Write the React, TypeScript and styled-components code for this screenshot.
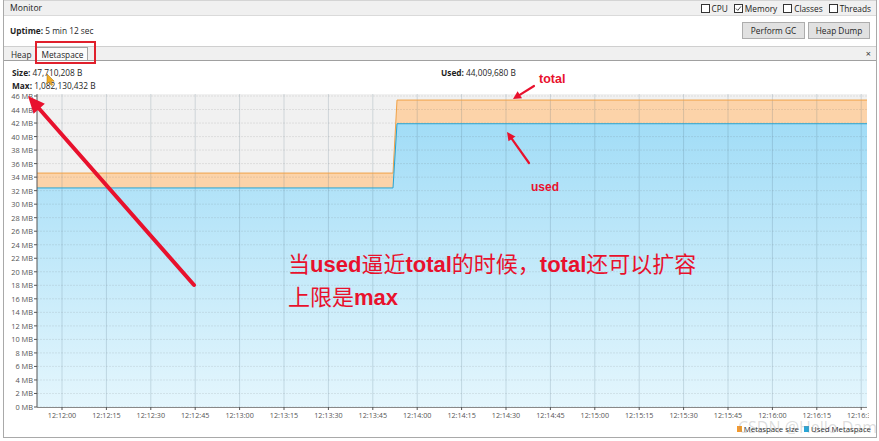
import React from 'react';
import styled, { createGlobalStyle } from 'styled-components';

const Global = createGlobalStyle`
  html, body { margin: 0; padding: 0; background: #fff; }
  body { font-family: "Open Sans", "Noto Sans", sans-serif; color: #1e1e1e; }
  * { box-sizing: border-box; }
`;

const Page = styled.div`
  position: relative;
  width: 879px;
  height: 441px;
  overflow: hidden;
  background: #fff;
`;

const Panel = styled.div`
  margin-left: 3px;
  width: 874px;
  height: 438px;
  border: 1px solid #a9a9a9;
  border-top: none;
  display: flex;
  flex-direction: column;
  font-size: 8.3px;
`;

const Header = styled.div`
  height: 16px;
  background: #f0f0f0;
  border-top: 1px solid #d4d4d4;
  border-bottom: 1px solid #dadada;
  display: flex;
  align-items: center;
  justify-content: space-between;
  padding: 0 5px 0 6px;
`;

const Title = styled.span`
  font-size: 8.6px;
  color: #222;
`;

const Checks = styled.div`
  display: flex;
  align-items: center;
  gap: 6px;
`;

const CheckLabel = styled.label`
  display: flex;
  align-items: center;
  gap: 2px;
  color: #222;
`;

const Box = styled.span`
  width: 9px;
  height: 9px;
  border: 1px solid #333;
  background: #fff;
  display: flex;
  align-items: center;
  justify-content: center;
`;

const UptimeRow = styled.div`
  height: 30px;
  display: flex;
  align-items: center;
  justify-content: space-between;
  padding: 0 6px 2px 6px;
  background: #fff;
`;

const Buttons = styled.div`
  display: flex;
  gap: 3px;
`;

const Button = styled.button<{ $w: number }>`
  width: ${(p) => p.$w}px;
  height: 17px;
  background: #e1e1e1;
  border: 1px solid #adadad;
  font: inherit;
  font-size: 8.3px;
  color: #1e1e1e;
  padding: 0;
`;

const TabBar = styled.div`
  height: 15px;
  background: #f0f0f0;
  border-top: 1px solid #cfcfcf;
  border-bottom: 1px solid #a0a0a0;
  display: flex;
  align-items: stretch;
  padding-left: 2px;
`;

const Tab = styled.div<{ $active?: boolean }>`
  display: flex;
  align-items: center;
  padding: 0 4px;
  background: ${(p) => (p.$active ? '#fbfbfb' : 'transparent')};
  border: 1px solid ${(p) => (p.$active ? '#a5a5a5' : 'transparent')};
  border-bottom: none;
  color: #1e1e1e;
`;

const Close = styled.div`
  margin-left: auto;
  padding-right: 5px;
  display: flex;
  align-items: center;
  font-size: 9px;
  color: #333;
`;

const Info = styled.div`
  height: 31px;
  display: grid;
  grid-template-columns: 429px 1fr;
  grid-template-rows: 13px 13px;
  align-content: start;
  padding: 5px 0 0 8px;
  line-height: 13px;
  background: #fff;
`;

const Strong = styled.b`
  font-weight: 700;
`;

const ChartWrap = styled.div`
  height: 328px;
  background: #fff;
`;

const Legend = styled.div`
  height: 17px;
  display: flex;
  align-items: center;
  justify-content: flex-end;
  gap: 5px;
  padding-right: 5px;
  font-size: 7.8px;
  line-height: 10px;
  white-space: nowrap;
  background: #fff;
`;

const LegendItem = styled.span`
  display: flex;
  align-items: center;
  gap: 2px;
`;

const Swatch = styled.span<{ $c: string }>`
  width: 5px;
  height: 6px;
  background: ${(p) => p.$c};
`;

const Overlay = styled.svg`
  position: absolute;
  left: 0;
  top: 0;
  pointer-events: none;
`;

const Note = styled.div<{ $size: number }>`
  position: absolute;
  color: #e8112d;
  font-family: "Liberation Sans", "Noto Sans CJK SC", sans-serif;
  font-size: ${(p) => p.$size}px;
  font-weight: 700;
  white-space: nowrap;
`;

const BigNote = styled.div`
  position: absolute;
  left: 288px;
  top: 248px;
  color: #e8112d;
  font-family: "Liberation Sans", "Noto Sans CJK SC", sans-serif;
  font-size: 22px;
  line-height: 33px;
  white-space: nowrap;
`;

const Bold = styled.b`
  font-weight: 700;
`;

const Watermark = styled.div`
  position: absolute;
  left: 738px;
  top: 417px;
  font-family: "Open Sans", sans-serif;
  font-size: 16px;
  line-height: 20px;
  color: rgba(140, 140, 140, 0.3);
  white-space: nowrap;
  pointer-events: none;
`;

const Check = ({ label, checked }: { label: string; checked?: boolean }) => (
  <CheckLabel>
    <Box>
      {checked && (
        <svg width="7" height="7" viewBox="0 0 7 7">
          <path d="M1 3.6 L2.8 5.4 L6 1.4" fill="none" stroke="#333" strokeWidth="0.9" />
        </svg>
      )}
    </Box>
    {label}
  </CheckLabel>
);

const X0 = 37;
const X1 = 867;
const YB = 407;
const YT = 94;
const PPM = (407 - 96) / 46;
const yOf = (v: number) => YB - v * PPM;
const times = Array.from({ length: 19 }, (_, i) => {
  const s = 12 * 60 + i * 15;
  const m = Math.floor(s / 60);
  const sec = s % 60;
  return { x: 62 + i * 44.4, t: `12:${m}:${String(sec).padStart(2, '0')}` };
});
const mbs = Array.from({ length: 24 }, (_, i) => i * 2);

const STEP_A = 393;
const STEP_B = 397;
const tot1 = yOf(34.6);
const tot2 = yOf(45.4);
const used1 = yOf(32.4);
const used2 = yOf(41.9);

const Chart = () => (
  <svg width="872" height="328" viewBox="4 92 872 328" style={{ display: 'block' }}>
    <defs>
      <linearGradient id="blue" x1="0" y1={YT} x2="0" y2={YB} gradientUnits="userSpaceOnUse">
        <stop offset="0" stopColor="#9bdaf6" />
        <stop offset="1" stopColor="#e4f6fd" />
      </linearGradient>
      <clipPath id="lab">
        <rect x="4" y="92" width={X1 + 2 - 4} height="330" />
      </clipPath>
    </defs>
    <rect x={X0} y={YT} width={X1 - X0} height={YB - YT} fill="#f1f1f1" />
    <polygon
      points={`${X0},${tot1} ${STEP_A},${tot1} ${STEP_B},${tot2} ${X1},${tot2} ${X1},${YB} ${X0},${YB}`}
      fill="#fcd3a9"
    />
    <polygon
      points={`${X0},${used1} ${STEP_A},${used1} ${STEP_B},${used2} ${X1},${used2} ${X1},${YB} ${X0},${YB}`}
      fill="url(#blue)"
    />
    {mbs.map((v) => (
      <line key={v} x1={X0} x2={X1} y1={yOf(v)} y2={yOf(v)} stroke="rgba(90,90,90,0.12)" strokeWidth="1" strokeDasharray="2 1" />
    ))}
    {times.map(({ x }) => (
      <line key={x} x1={x} x2={x} y1={YT} y2={YB} stroke="rgba(70,100,120,0.2)" strokeWidth="1" />
    ))}
    <polyline
      points={`${X0},${tot1} ${STEP_A},${tot1} ${STEP_B},${tot2} ${X1},${tot2}`}
      fill="none"
      stroke="#f0a248"
      strokeWidth="1"
    />
    <polyline
      points={`${X0},${used1} ${STEP_A},${used1} ${STEP_B},${used2} ${X1},${used2}`}
      fill="none"
      stroke="#26a4d4"
      strokeWidth="1"
    />
    <line x1={X0} x2={X0} y1={YT} y2={YB} stroke="#555" strokeWidth="1" />
    <line x1={X0} x2={X1} y1={YB + 0.5} y2={YB + 0.5} stroke="#888" strokeWidth="1" />
    {mbs.map((v) => (
      <g key={v}>
        <line x1={X0 - 3} x2={X0} y1={yOf(v)} y2={yOf(v)} stroke="#555" />
        <text x={X0 - 4} y={yOf(v)} textAnchor="end" dominantBaseline="central" fontSize="7.4" fill="#555" fontFamily="Open Sans, sans-serif">
          {v} MB
        </text>
      </g>
    ))}
    <g clipPath="url(#lab)">
      {times.map(({ x, t }) => (
        <g key={t}>
          <line x1={x} x2={x} y1={YB} y2={YB + 3} stroke="#555" />
          <text x={x} y={415} textAnchor="middle" dominantBaseline="central" fontSize="7.2" fill="#555" fontFamily="Open Sans, sans-serif">
            {t}
          </text>
        </g>
      ))}
    </g>
  </svg>
);

const arrow = (tx: number, ty: number, hx: number, hy: number, len: number, half: number) => {
  const dx = hx - tx;
  const dy = hy - ty;
  const L = Math.hypot(dx, dy);
  const ux = dx / L;
  const uy = dy / L;
  const bx = hx - ux * len;
  const by = hy - uy * len;
  const px = -uy;
  const py = ux;
  return {
    end: [bx + ux, by + uy],
    pts: `${hx},${hy} ${bx + px * half},${by + py * half} ${bx - px * half},${by - py * half}`,
  };
};

const RED = '#e8112d';

const Arrow = ({ t, h, len, half, w }: { t: [number, number]; h: [number, number]; len: number; half: number; w: number }) => {
  const a = arrow(t[0], t[1], h[0], h[1], len, half);
  return (
    <g>
      <line x1={t[0]} y1={t[1]} x2={a.end[0]} y2={a.end[1]} stroke={RED} strokeWidth={w} strokeLinecap="round" />
      <polygon points={a.pts} fill={RED} />
    </g>
  );
};

export default function App() {
  return (
    <Page>
      <Global />
      <Panel>
        <Header>
          <Title>Monitor</Title>
          <Checks>
            <Check label="CPU" />
            <Check label="Memory" checked />
            <Check label="Classes" />
            <Check label="Threads" />
          </Checks>
        </Header>
        <UptimeRow>
          <span>
            <Strong>Uptime:</Strong> 5 min 12 sec
          </span>
          <Buttons>
            <Button $w={63}>Perform GC</Button>
            <Button $w={62}>Heap Dump</Button>
          </Buttons>
        </UptimeRow>
        <TabBar>
          <Tab>Heap</Tab>
          <Tab $active>Metaspace</Tab>
          <Close>×</Close>
        </TabBar>
        <Info>
          <span>
            <Strong>Size:</Strong> 47,710,208 B
          </span>
          <span>
            <Strong>Used:</Strong> 44,009,680 B
          </span>
          <span>
            <Strong>Max:</Strong> 1,082,130,432 B
          </span>
        </Info>
        <ChartWrap>
          <Chart />
        </ChartWrap>
        <Legend>
          <LegendItem>
            <Swatch $c="#f39a2c" />
            Metaspace size
          </LegendItem>
          <LegendItem>
            <Swatch $c="#29a6d8" />
            Used Metaspace
          </LegendItem>
        </Legend>
      </Panel>

      <Watermark>CSDN @Hello Dam</Watermark>

      <Overlay width="879" height="441" viewBox="0 0 879 441">
        <rect x="36" y="42" width="59" height="21" fill="none" stroke="#e0202c" strokeWidth="2" />
        <polygon
          points="47,74 47,84 49.4,81.8 51,85.4 52.6,84.7 51,81.2 54.2,81.2"
          fill="#f2ad24"
          stroke="#9a6a10"
          strokeWidth="0.5"
        />
        <Arrow t={[194, 285]} h={[28, 96]} len={17} half={7.5} w={4} />
        <Arrow t={[534, 86]} h={[513, 99]} len={8} half={4.2} w={2.2} />
        <Arrow t={[529, 163]} h={[507, 132]} len={8.5} half={4.2} w={2.2} />
      </Overlay>

      <Note $size={12.5} style={{ left: 539, top: 72 }}>total</Note>
      <Note $size={12} style={{ left: 531, top: 180 }}>used</Note>
      <BigNote>
        当<Bold>used</Bold>逼近<Bold>total</Bold>的时候，<Bold>total</Bold>还可以扩容
        <br />
        上限是<Bold>max</Bold>
      </BigNote>
    </Page>
  );
}
